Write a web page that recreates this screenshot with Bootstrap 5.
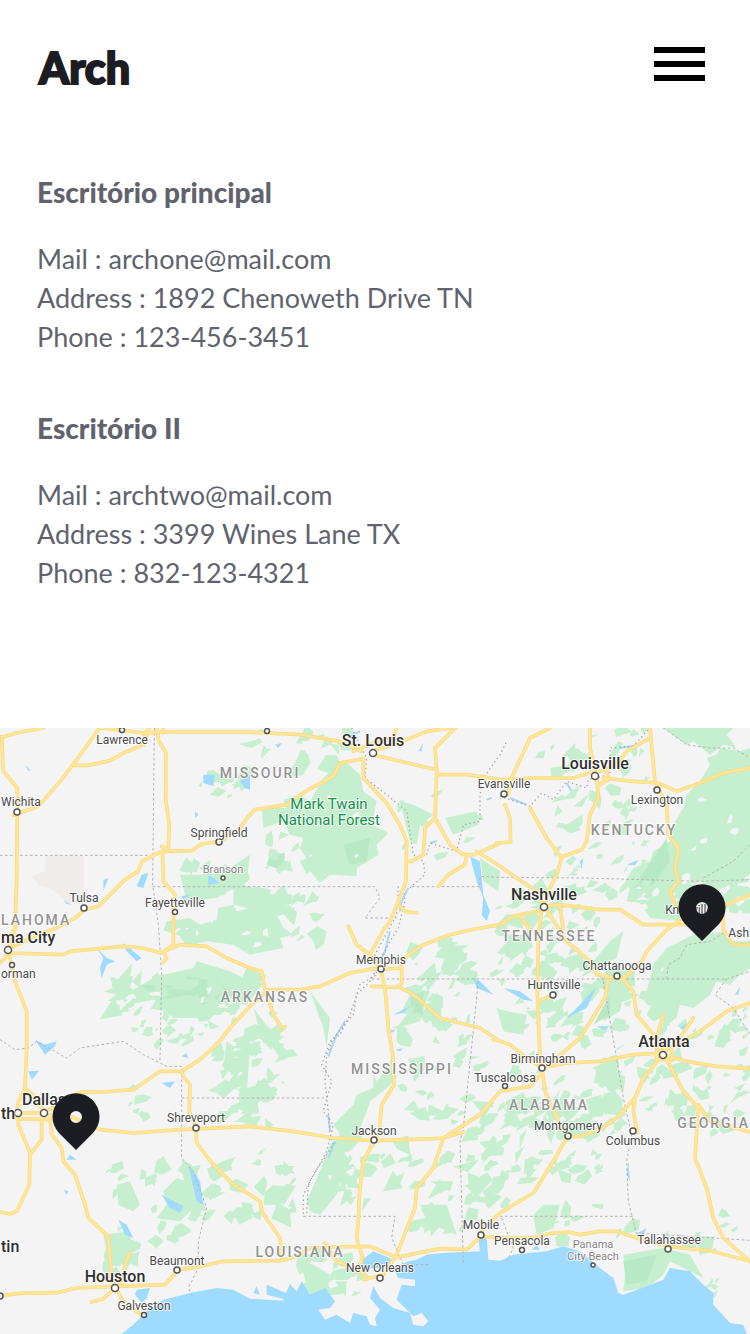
<!DOCTYPE html>
<html lang="pt-BR">
<head>
<meta charset="utf-8">
<meta name="viewport" content="width=device-width, initial-scale=1">
<title>Arch</title>
<link href="https://cdn.jsdelivr.net/npm/bootstrap@5.3.0/dist/css/bootstrap.min.css" rel="stylesheet">
<style>
  body { font-family: Lato, "Open Sans", sans-serif; color: #60636d; }
  .site-header { padding: 36px 45px 0 39px; height: 173px; }
  .brand { font-size: 43px; line-height: 64px; font-weight: 900; color: #1b1d23; text-decoration: none; -webkit-text-stroke: 2px #1b1d23; }
  .menu-btn { margin-top: 11px; width: 51px; }
  .offices { padding: 0 37px 136px; font-size: 27px; line-height: 39px; display: grid; gap: 53px; }
  .offices address { line-height: inherit; }
  .office-name { font-size: 28px; line-height: 39px; font-weight: 900; margin-bottom: 27px; }
  .office-map text { font-family: Roboto, sans-serif; text-anchor: middle; paint-order: stroke; stroke: #fff; stroke-opacity: .75; stroke-width: 2px; stroke-linejoin: round; }
  .office-map .from-left { text-anchor: start; }
  .office-map .to-right { text-anchor: end; }
  .town { font-size: 12px; fill: #4a4a4a; }
  .minor { font-size: 11px; fill: #858585; }
  .city { font-size: 16px; font-weight: 500; fill: #303030; }
  .region { font-size: 14px; font-weight: 500; fill: #929292; letter-spacing: 2px; }
  .park { font-size: 15px; fill: #16914b; }
</style>
</head>
<body>
<header class="site-header d-flex justify-content-between align-items-start">
  <a class="brand" href="#">Arch</a>
  <button class="menu-btn btn p-0 border-0 rounded-0 d-flex" type="button" aria-label="Menu">
    <svg class="w-100" viewBox="0 0 51 34" aria-hidden="true"><path d="M0 0h51v6H0zM0 14h51v6H0zM0 28h51v6H0z"/></svg>
  </button>
</header>

<main>
  <div class="offices">
    <section>
      <h2 class="office-name">Escritório principal</h2>
      <address class="m-0">
        <div>Mail : archone@mail.com</div>
        <div>Address : 1892 Chenoweth Drive TN</div>
        <div>Phone : 123-456-3451</div>
      </address>
    </section>
    <section>
      <h2 class="office-name">Escritório II</h2>
      <address class="m-0">
        <div>Mail : archtwo@mail.com</div>
        <div>Address : 3399 Wines Lane TX</div>
        <div>Phone : 832-123-4321</div>
      </address>
    </section>
  </div>

  <svg class="office-map d-block w-100" viewBox="0 0 750 606" role="img" aria-label="Mapa dos escritórios">
    <defs>
      <path id="pin" d="M0 33-17 16A23.500 23.500 0 1 1 17 16ZM0-6A6 6 0 1 0 0 6 6 6 0 1 0 0-6Z" fill="#1b1d23" fill-rule="evenodd"/>
      <!-- Main roads, shared by the casing and the fill -->
      <path id="roads" d="M0 30 50 15 130 0M5 25 10 130 52 180 52 252 50 450 45 606 25 665M40 262 115 235 185 155 245 75 295 5M215 112 265 112 330 98 370 75 430 50 445 10M300 0 435 15 500 12 750 12 900 20 1020 40 1085 70M430 20 450 0M490 15V0M470 0 475 35 498 75 497 215 508 290 505 365 485 355
      M25 665 100 625 170 600 225 570 255 545 295 535 375 455 415 430 425 400 485 370 575 368 605 348 660 340 715 305 750 260 765 245 860 230 925 185 1000 145 1020 105 1090 92M488 370 490 460 525 500 520 560 520 650 490 670 500 690 490 702
      M0 705 15 690 25 665M25 675 190 680 210 670 370 655 430 660 480 675 540 650 620 655 680 690 750 720 785 730 795 785 900 785 960 775 1050 735 1120 722 1142 724 1200 720 1215 690 1260 655 1350 620 1410 606 1500 590 1540 565 1632 545M40 635V606M800 795 820 860 845 900 855 897M795 795 750 835 690 900 650 950 600 995 545 1030
      M28 680 45 760 80 850 80 960 75 1080 55 1120 50 1156 132 1154M75 1080 110 1110 130 1150M50 1172 150 1175M55 1160 55 1190 90 1275 88 1370 50 1450 30 1458 0 1452M125 1150 125 1235 90 1280M150 1160 155 1220 185 1260 190 1300 225 1340 255 1430 265 1470 325 1525 335 1650 345 1680
      M132 1154 240 1092 310 1092 400 1085 480 1030 545 1030 550 1045 570 1070 568 1150 588 1200M200 1160 300 1205 400 1215 540 1205 750 1195 880 1210 1000 1230 1120 1238 1300 1232 1330 1230 1440 1160 1500 1090 1590 1075 1627 1035M1330 1230 1390 1212M588 1210 590 1245 640 1310 700 1370 750 1400 780 1420 785 1450 840 1530 845 1590
      M0 1703 60 1696 170 1694 230 1680 495 1670 535 1625 590 1618 670 1600 845 1598 890 1585 930 1560 990 1557 1110 1555 1190 1588 1320 1562 1400 1565 1443 1525 1500 1528 1600 1530 1645 1517 1705 1512 1740 1520 1800 1510 1850 1510 1910 1530 2005 1555 2130 1568 2250 1600M275 1722 310 1712 335 1690 370 1660 375 1610 390 1575M350 1685 370 1720 430 1765
      M1142 724 1155 780 1165 900 1178 980 1182 1070 1145 1130 1138 1210 1122 1238 1090 1300 1078 1400 1075 1480 1070 1530 1088 1590 1075 1620M1330 1230 1300 1320 1250 1380 1245 1440 1190 1580 1150 1640 1090 1655M975 1545 1010 1600 1050 1618 1100 1645
      M1115 775 1200 778 1240 800 1320 870 1440 900 1500 940 1530 950 1580 990 1627 1020M1205 715 1205 765 1190 778M1090 90 1090 150 1160 225 1200 290 1220 340 1218 460 1195 520 1170 580 1150 606 1110 680 1142 724M1045 595 1070 650 1110 680M1195 530 1215 550 1250 555
      M1120 80 1200 100 1310 125 1310 140 1400 140 1500 155 1600 150 1720 150 1785 130M1060 70 1130 40 1180 30 1190 0M1120 70 1220 35 1280 10 1350 0M1310 125 1305 60 1365 0M1310 130 1305 270 1275 300 1270 380 1235 400 1222 400M1305 270 1350 350 1390 380 1425 380 1500 345M1530 342 1490 345M1532 342 1530 270 1515 230M1400 380 1395 410 1345 440 1315 475M1430 370 1500 415 1550 450 1610 490 1632 535
      M1525 200 1530 160 1590 30 1650 0M1590 240 1640 330 1685 390 1670 440 1640 500 1632 535M1785 130 1770 60 1770 0M1790 140 1795 210 1770 260 1760 340 1745 365 1690 385M1810 150 1900 160 1975 165 2030 190 2100 165 2170 135 2250 120M1800 170 1825 155 1820 125 1800 130 1850 110 1880 70 1950 30M1950 0 1965 160 1980 190 2000 230 2005 320 2035 360 2025 420 2035 460 2010 490 2025 530 2060 570
      M1632 535 1680 530 1800 545 1860 545 1930 590 2050 590 2110 560 2180 530 2250 500M2170 560 2170 606 2200 650 2250 650M1625 540 1615 640 1612 800 1620 980 1627 1020M1640 545 1700 640 1770 700 1790 740 1850 750 1870 755 1900 790 1910 860 1960 920 1985 970M1560 565 1590 606M1680 535 1690 606M1870 750 1920 710 1940 670 2000 606 2050 570M1825 755 1815 810 1740 930 1670 990 1627 1020M1615 820 1660 800
      M1627 1020 1700 1005 1800 1000 1900 980 1989 975M1500 940 1480 935M1627 1025 1635 1090 1680 1190 1703 1224 1660 1300 1600 1395 1500 1455 1450 1500 1443 1520M1703 1226 1740 1225 1800 1205 1850 1170 1905 1110 1930 1050 1989 980M1905 1110 1900 1150 1912 1212M1995 985 2050 1090 2095 1140 2090 1212 2085 1290 2120 1380 2140 1470 2170 1530 2250 1600M2095 1130 2130 1180 2250 1212M1989 980 2060 1000 2150 1015 2250 1022M1989 970 2100 910 2180 850 2250 825M1970 930 1990 860M2040 930 2080 870M1970 960H2015V995H1970Z"/>
    </defs>

    <rect width="750" height="606" fill="#f4f4f4"/>
    <!-- Terrain is drawn on a grid three times as fine as the labels -->
    <g transform="scale(.33333)">
      <path fill="#f0ecea" d="M138 382H250V530L200 520 150 480 120 475 95 445 135 430Z"/>
      <g fill="#c5efce">
        <path d="M970 150 1030 95 1080 140 1090 190 1130 220 1115 290 1165 315 1130 350 1135 380 1070 420 1070 445 990 440 960 465 930 430 920 440 900 400 920 390 900 360 910 330 870 320 850 280 790 300 785 240 860 240 850 215 900 200 930 220Z"/>
        <path d="M490 606 500 580 570 570 600 590 650 575 655 540 700 530 710 550 750 540 830 560 850 600 880 620 840 630 850 660 750 680 700 650 620 640 560 655 540 625Z"/>
        <path d="M310 790 380 770 400 785 470 745 580 720 590 700 690 730 750 760 790 765 740 830 690 825 620 870 520 870 490 840 520 820 460 815 380 830 370 815 320 820 350 800Z"/>
        <path d="M2250 60 2220 70 2160 60 2150 80 2120 90 2130 110 2100 160 2060 200 2050 240 2020 290 2010 340 1960 370 1950 400 1900 420 1870 470 1890 480 1880 520 1920 525 1950 570 2050 580 2100 540 2120 500 2170 480 2250 440ZM1990 0 2060 50 2080 40 2130 80 2170 50 2210 60 2180 20 2200 0Z"/>
        <path d="M1940 860 1960 820 1940 790 1950 750 1960 710 2000 660 2080 620 2180 610 2190 640 2250 640 2250 720 2220 740 2190 770 2150 760 2130 800 2080 840 2040 830 2030 870 2000 890 1985 870 1960 880Z"/>
        <path d="M1175 960 1170 1010 1130 1060 1120 1040 1120 1080 1070 1100 1060 1130 1000 1190 1020 1220 990 1250 960 1330 920 1420 930 1450 960 1460 1010 1400 1050 1300 1030 1270 1080 1200 1100 1150 1110 1120 1160 1080 1190 1050Z"/>
        <path d="M1205 850 1220 860 1190 900 1260 880 1270 840 1290 790 1240 780 1220 820ZM900 1600 940 1610 990 1640 980 1660 1000 1700 950 1700 920 1670ZM680 940 700 955 750 945 740 1100 700 1080 670 1090 700 1040 670 1020ZM930 790 990 870 980 960 970 900ZM1440 390 1500 430 1495 490 1450 460ZM1335 270 1430 250 1435 290 1360 320ZM1200 220 1240 230 1300 260 1260 290 1250 350 1230 340ZM760 840 860 970 850 1000 780 910ZM700 460 820 500 850 470 870 510 830 560 700 530ZM540 440 630 440 690 420 750 380 740 460 650 510 560 520Z"/>
        <path d="M350 1370 390 1360 420 1430 400 1450 355 1430ZM310 1520 390 1510 400 1600 380 1620 320 1570ZM490 1390 530 1350 560 1360 580 1340 620 1450 580 1440 540 1480 470 1470 500 1430ZM545 1295 575 1310 600 1400 560 1370ZM1260 1430 1340 1430 1370 1520 1320 1500 1260 1490 1280 1460ZM1290 1360 1360 1360 1350 1390ZM1600 1460 1630 1430 1680 1430 1660 1500 1610 1520ZM1870 1580 1990 1560 2070 1580 2110 1650 2010 1600 1990 1640 1940 1680 1870 1690 1875 1640ZM1830 740 1890 720 1860 850 1810 880ZM1740 750 1830 640 1870 610 1850 690ZM1490 840 1520 850 1580 860 1570 920 1510 910Z"/>
      </g>
      <g fill="#b9e9c4"><path d="M810 380 855 375 850 430 800 410ZM1030 350 1110 330 1100 400 1050 410ZM420 770 540 775 560 745 650 760 700 800 610 830 570 800 480 815ZM1230 810 1270 790 1270 870 1235 860ZM1870 1600 1970 1580 1940 1660 1880 1670ZM2000 330 2010 400 1960 470 1900 480ZM1780 890 1830 800 1830 860Z"/></g>
      <g id="woods" fill="#c5efce"></g>
      <path id="clearings" fill="#f4f4f4"/>
      <g fill="#9fdaff">
        <path d="M365 1818 400 1790 440 1750 490 1715 570 1695 650 1680 700 1685 750 1712 850 1718 855 1700 870 1668 890 1690 905 1660 930 1700 975 1680 1005 1720 990 1740 955 1745 975 1775 1010 1760 1050 1785 1060 1755 1100 1765 1110 1790 1130 1795 1125 1770 1140 1745 1110 1710 1120 1675 1140 1710 1180 1740 1230 1755 1240 1790 1270 1795 1285 1780 1265 1755 1240 1765 1190 1715 1205 1670 1245 1675 1245 1655 1195 1650 1180 1620 1225 1600 1250 1595 1280 1580 1330 1575 1440 1570 1435 1530 1460 1525 1465 1595 1500 1598 1540 1580 1640 1570 1690 1555 1740 1570 1800 1620 1840 1650 1855 1695 1870 1700 1940 1675 1990 1655 2010 1620 2070 1630 2110 1670 2140 1695 2140 1730 2190 1785 2230 1790 2240 1818Z"/>
        <path d="M1075 1605 1120 1570 1170 1590 1180 1620 1100 1620ZM405 1700 410 1685 450 1680 440 1710 425 1725ZM770 1675 780 1700 760 1695ZM800 1670 870 1700 860 1715 800 1700ZM105 935 135 950 170 940 165 955 135 980ZM85 1030 118 1028 95 1055ZM290 660 320 690 345 700 320 710 305 750 300 720 310 690ZM370 645 425 690 410 700 380 670ZM310 455 325 450 310 490ZM425 440 445 435 430 480 410 475ZM610 140 645 140 640 175 610 165ZM720 160 750 140 750 185 735 180ZM625 440 660 465 625 470ZM545 505 570 500 550 515ZM485 1065 525 1060 510 1080ZM545 985 560 975 565 990ZM565 1310 600 1360 610 1430 590 1420ZM485 1400 550 1435 540 1455 510 1440ZM355 1475 380 1490 400 1530 375 1520ZM200 1295 210 1280 230 1295ZM75 110 90 125 85 130ZM585 250 595 260 585 270ZM190 515 215 530 200 528ZM190 1385 205 1390 200 1400ZM1410 385 1440 400 1450 500 1470 550 1460 580 1445 560 1450 510 1430 460ZM1880 410 1915 395 1905 412ZM1740 400 1750 390 1745 425ZM1510 780 1560 790 1600 820 1570 815ZM1700 870 1730 840 1790 775 1760 840 1710 865ZM1180 860 1230 835 1210 855ZM1170 905 1188 905 1175 915ZM1185 965 1210 960 1200 970ZM1420 750 1440 760 1480 800 1430 780ZM1790 895 1830 895 1810 905ZM2040 900 2060 885 2050 905ZM2205 800 2220 775 2215 800ZM1885 1300 1890 1360 1880 1340ZM1915 1515 1940 1500 1930 1520ZM825 50 845 45 835 60ZM1255 70 1270 45 1265 70ZM1595 1565 1610 1550 1620 1565Z"/>
      </g>
      <g fill="none" stroke="#a5d9f7" stroke-width="6"><path d="M1225 480 1205 520 1200 550M1170 610 1155 670 1125 730M1035 880 1010 920 985 985M985 1160 990 1210M1005 1240 985 1290M1290 345 1310 340M1460 215 1475 210M1530 210 1580 230M1700 165 1715 190M1860 60 1920 50M1050 25 1080 10"/></g>
      <g fill="none" stroke="#b3b3b3" stroke-width="3" stroke-dasharray="8 7"><path d="M0 382H458M463 0 458 470 475 590 485 740 480 1000M458 476H1125L1140 510 1095 570H1190M0 935 45 965 85 960 110 940 200 990 240 960 370 940 430 980 500 1015 545 1015V1290L580 1330 620 1440 595 1540V1620L565 1680 580 1710M545 1110H975M910 1465H1185L1175 1530 1210 1610 1290 1610M1115 753H2180M1435 760 1390 1200 1380 1240 1390 1610M1810 760 1870 1110 1895 1220 1880 1300 1885 1420 1910 1520M1500 1465H1900M1505 1470 1540 1560 1520 1600M1910 1515 2250 1537M1235 476H1440V445L1500 448 1750 450 2100 460 2250 455M1990 0 2060 50 2130 60 2200 60 2250 90M2110 450 2200 400 2250 350M2000 753 2005 710 2040 690 2060 650 2130 640 2180 610M2180 753 2145 800 2200 840 2250 920M2180 753 2250 730"/></g>
      <g fill="none" stroke="#a6a6a6" stroke-width="4" stroke-dasharray="4 9"><path d="M1055 0 1070 30 1100 90 1095 150 1160 200 1220 250 1240 380 1270 400 1275 440 1230 480M1210 470 1215 520 1195 600 1170 640 1140 700 1110 760 1070 800 1060 860 1000 930 980 980 975 1060 985 1150 990 1220 1000 1250 940 1340 910 1400 910 1465M1195 475 1190 560 1125 680 1130 740 1080 770 1050 860 1020 920 990 940 965 1010 995 1060 970 1150 1000 1190 980 1270 925 1370 920 1460M1280 380 1290 345 1370 370 1390 290 1440 280V200L1450 150 1500 80 1520 40M1500 205 1590 235 1625 195 1660 215 1700 160 1760 180 1765 155 1830 140 1830 60 1900 55 1950 0"/></g>
      <g fill="none" stroke-linejoin="round" stroke-linecap="round">
        <use href="#roads" stroke="#fbd980" stroke-width="11"/>
        <use href="#roads" stroke="#ffe596" stroke-width="7"/>
      </g>
    </g>

    <g id="dots" fill="#fff" stroke="#555" stroke-width="1.500"></g>

    <g class="region">
      <text x="260" y="50">MISSOURI</text><text x="634" y="107">KENTUCKY</text><text x="549" y="213">TENNESSEE</text><text x="265" y="274">ARKANSAS</text><text x="402" y="346">MISSISSIPPI</text><text x="549" y="382">ALABAMA</text><text class="to-right" x="750" y="400">GEORGIA</text><text x="300" y="529">LOUISIANA</text><text class="from-left" x="1" y="197">LAHOMA</text>
    </g>
    <g class="park"><text x="329" y="81">Mark Twain</text><text x="329" y="97">National Forest</text></g>
    <g class="city">
      <text x="373" y="18">St. Louis</text><text x="595" y="41">Louisville</text><text x="544" y="172">Nashville</text><text x="664" y="319">Atlanta</text><text x="115" y="554">Houston</text><text x="44" y="377">Dallas</text><text class="from-left" x="1" y="215">ma City</text><text class="from-left" x="1" y="391">th</text><text class="from-left" x="1" y="524">tin</text>
    </g>
    <g class="town">
      <text x="122" y="16">Lawrence</text><text class="from-left" x="1" y="78">Wichita</text><text x="219" y="109">Springfield</text><text x="504" y="60">Evansville</text><text x="657" y="76">Lexington</text><text x="84" y="174">Tulsa</text><text x="175" y="179">Fayetteville</text><text x="689" y="186">Knoxville</text><text class="to-right" x="749" y="209">Ash</text><text x="381" y="236">Memphis</text><text x="617" y="242">Chattanooga</text><text x="554" y="261">Huntsville</text><text x="543" y="335">Birmingham</text><text x="505" y="354">Tuscaloosa</text><text x="568" y="402">Montgomery</text><text x="633" y="417">Columbus</text><text x="374" y="407">Jackson</text><text x="196" y="394">Shreveport</text><text x="481" y="501">Mobile</text><text x="522" y="517">Pensacola</text><text x="669" y="516">Tallahassee</text><text x="380" y="544">New Orleans</text><text x="177" y="537">Beaumont</text><text x="144" y="582">Galveston</text><text class="from-left" x="1" y="250">orman</text>
    </g>
    <g class="minor"><text x="223" y="145">Branson</text><text x="593" y="520">Panama</text><text x="593" y="532">City Beach</text></g>

    <use href="#pin" x="702" y="180"/>
    <use href="#pin" x="76" y="389"/>
  </svg>
</main>

<script src="https://cdn.jsdelivr.net/npm/bootstrap@5.3.0/dist/js/bootstrap.bundle.min.js"></script>
<script>
  // Town markers: x, y, radius
  const towns = [[122,2,2.500],[267,3,2.500],[373,25,3.500],[17,84,3],[219,114,3],[504,66,3],[595,48,3.500],[657,62,3],[84,180,3],[175,184,2.500],[223,150,2],[544,179,3.500],[8,222,3.500],[12,237,2.500],[381,241,3],[617,248,3],[553,267,3],[663,327,3.500],[542,340,3],[505,358,2.500],[568,408,3],[633,403,3],[374,412,3],[196,400,3],[18,385,3.500],[44,385,3.500],[115,560,3.500],[177,542,3],[144,587,2.500],[481,507,3],[522,522,2.500],[593,537,2],[668,521,3],[380,550,3],[0,568,3]];
  document.getElementById('dots').innerHTML = towns.map(([x, y, r]) => `<circle cx="${x}" cy="${y}" r="${r}"/>`).join('');

  // Scattered woodland: x, y, width, height, number of patches, largest radius
  const woods = [[600,120,150,120,9,30],[750,10,330,110,14,36],[900,80,100,40,4,40],[780,300,110,130,8,30],[550,400,250,150,20,34],[750,480,240,170,20,40],[330,740,430,120,32,42],[400,850,120,100,8,26],[490,840,250,130,18,30],[640,930,180,270,30,44],[750,850,120,300,22,32],[1170,750,240,200,24,36],[1230,640,260,110,18,40],[1200,980,280,210,28,36],[1000,1210,240,220,22,38],[1240,1230,130,270,12,38],[1400,1200,120,260,30,36],[640,1270,240,200,26,42],[440,1280,200,270,20,34],[300,1300,130,100,6,32],[290,1500,170,140,10,34],[900,1560,200,140,16,38],[1500,480,350,260,50,42],[1500,760,300,250,28,34],[1500,1020,400,200,62,36],[1500,1210,320,150,28,36],[1620,0,330,260,30,38],[1650,250,300,230,24,30],[1800,740,160,300,20,36],[1930,880,320,180,26,34],[1930,1060,290,150,26,36],[2150,800,100,150,10,28],[2050,430,200,130,18,38],[1600,1430,300,110,10,32],[1980,1510,200,80,8,30],[2090,1620,60,60,5,22],[340,1030,150,170,5,28],[1200,200,250,200,8,26],[1270,1450,120,60,6,30],[2160,1450,60,80,3,26],[2100,1700,60,60,4,24]];
  // Open ground inside the large forests
  const open = [[930,200,180,200,4,14],[500,580,350,80,8,18],[380,760,330,90,9,18],[2080,130,150,250,5,16],[1900,440,220,110,14,24],[1980,680,200,150,4,14],[980,1200,110,220,6,14],[690,960,60,130,4,20]];
  let seed = 11;
  const rnd = () => (seed = (seed * 16807) % 2147483647) / 2147483647;
  function patches(areas) {
    let d = '';
    for (const [x, y, w, h, n, size] of areas) {
      for (let i = 0; i < n; i++) {
        const cx = x + rnd() * w, cy = y + rnd() * h, r = size * (.35 + rnd() * .8);
        const k = 3 + Math.floor(rnd() * 5), turn = rnd() * 6, tilt = -1.2 + rnd() * 1.2, flat = .4 + rnd() * .5;
        for (let j = 0; j < k; j++) {
          const a = turn + (j + rnd() * .5) / k * 6.283, q = r * (.35 + rnd() * .9);
          const u = Math.cos(a) * q, v = Math.sin(a) * q * flat;
          d += (j ? 'L' : 'M') + Math.round(cx + u * Math.cos(tilt) - v * Math.sin(tilt)) + ' ' + Math.round(cy + u * Math.sin(tilt) + v * Math.cos(tilt));
        }
        d += 'Z';
      }
    }
    return d;
  }
  document.getElementById('woods').innerHTML = `<path d="${patches(woods)}"/>`;
  document.getElementById('clearings').setAttribute('d', patches(open));
</script>
</body>
</html>
